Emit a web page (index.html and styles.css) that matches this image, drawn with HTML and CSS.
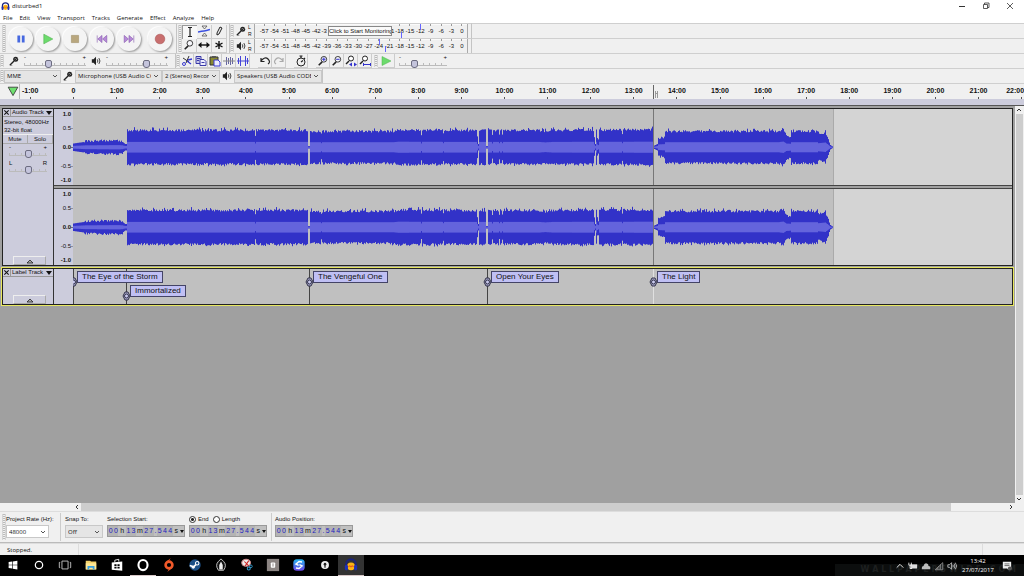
FILE: index.html
```html
<!DOCTYPE html>
<html lang="en">
<head>
    <meta charset="UTF-8">
    <meta name="viewport" content="width=device-width, initial-scale=1.0">
    <title>disturbed1</title>
    <link rel="stylesheet" href="styles.css">
    <script src="script.js" defer></script>
</head>
<body>

    <!-- Shared icons -->
    <svg class="defs" width="0" height="0" aria-hidden="true">
        <symbol id="mic" viewBox="0 0 12 12"><path d="M1 11 6 6" stroke="#222" stroke-width="1.6"/><path d="M1 11.500h3" stroke="#888"/><circle cx="8" cy="4" r="3" fill="#222"/><path d="M6.500 4 8 2.500M8 5l2-2" stroke="#ddd" stroke-width=".8"/></symbol>
        <symbol id="speaker" viewBox="0 0 12 12"><path d="M1 4h2l3-3v10L3 8H1z" fill="#222"/><path d="M7.500 4q1.500 2 0 4M9.500 2.500q2.500 3.500 0 7" fill="none" stroke="#222"/></symbol>
        <symbol id="audacity" viewBox="0 0 16 16"><path d="M2.500 9V7a5.500 5.500 0 0 1 11 0v2" fill="none" stroke="#1a237e" stroke-width="2.200"/><circle cx="8" cy="9.500" r="4.500" fill="#fbb414"/><path d="M5 10l1.500-1 1.500 1 1.500-1 1.500 1" fill="none" stroke="#e8561c" stroke-width="1.200"/><rect x="1" y="8" width="3.500" height="6" rx="1.500" fill="#1f2fb4"/><rect x="11.500" y="8" width="3.500" height="6" rx="1.500" fill="#1f2fb4"/></symbol>
        <symbol id="lens" viewBox="0 0 14 14"><path d="M2 12 6 8" stroke="#222" stroke-width="1.800"/><circle cx="8" cy="5" r="3.300" fill="#f6f6fa" stroke="#222"/></symbol>
        <symbol id="handle" viewBox="0 0 9 10"><path d="M3 1h3l2 4-2 4H3L1 5z" fill="#a8a8cc" stroke="#33334a"/><circle cx="4.500" cy="5" r="2" fill="#c9c9ee" stroke="#33334a"/></symbol>
    </svg>

    <header class="titlebar">
        <svg class="app-icon"><use href="#audacity"/></svg>
        <span class="title">disturbed1</span>
        <button class="win-btn" aria-label="Minimise"><svg viewBox="0 0 10 10"><path d="M2 5.500h6" stroke="#333"/></svg></button>
        <button class="win-btn" aria-label="Restore"><svg viewBox="0 0 10 10" fill="none" stroke="#333" stroke-width=".8"><path d="M2.500 3.500h4v4h-4zM3.500 3.500v-1.500h4.500v4.500H6.500"/></svg></button>
        <button class="win-btn" aria-label="Close"><svg viewBox="0 0 10 10"><path d="m2 2 6 6m0-6-6 6" stroke="#333" stroke-width=".8"/></svg></button>
    </header>

    <nav class="menu">
        <button>File</button><button>Edit</button><button>View</button><button>Transport</button><button>Tracks</button><button>Generate</button><button>Effect</button><button>Analyze</button><button>Help</button>
    </nav>

    <div class="dock">
        <div class="dock-row tall">
            <div class="toolbar transport">
                <i class="grip"></i>
                <button class="round" aria-label="Pause"><svg viewBox="0 0 10 10" fill="#4668e0"><path d="M2 2h2.300v6H2zM5.700 2H8v6H5.700z"/></svg></button>
                <button class="round" aria-label="Play"><svg viewBox="0 0 10 10"><path d="M1.500 1 9 5 1.500 9z" fill="#6cdb6c" stroke="#4eb04e" stroke-width=".5"/></svg></button>
                <button class="round" aria-label="Stop"><svg viewBox="0 0 10 10"><path d="M2 2h6v6H2z" fill="#b9a77e" stroke="#a08f68" stroke-width=".5"/></svg></button>
                <button class="round" aria-label="Skip to start"><svg viewBox="0 0 10 10" fill="#b78ad8" stroke="#8558ad" stroke-width=".5"><path d="M1 2v6M5 2 1.500 5 5 8zM9 2 5.500 5 9 8z"/></svg></button>
                <button class="round" aria-label="Skip to end"><svg viewBox="0 0 10 10" fill="#b78ad8" stroke="#8558ad" stroke-width=".5"><path d="M9 2v6M5 2l3.500 3L5 8zM1 2l3.500 3L1 8z"/></svg></button>
                <button class="round record" aria-label="Record"><svg viewBox="0 0 10 10"><circle cx="5" cy="5" r="4" fill="#c86e6e" stroke="#a55" stroke-width=".5"/></svg></button>
            </div>
            <div class="toolbar tools">
                <i class="grip"></i>
                <div class="tool-grid">
                    <button class="tool on" aria-label="Selection tool"><svg viewBox="0 0 12 12"><path d="M4 1.500h4M4 10.500h4M6 2v8" stroke="#222" stroke-width="1.200"/></svg></button>
                    <button class="tool" aria-label="Envelope tool"><svg viewBox="0 0 12 12" fill="none"><path d="M4 1h5L6.500 4zM4 11h5L6.500 8z" stroke="#555" stroke-width=".8"/><path d="M0 7q4-1 6-1t6-1.500" stroke="#3a4fe0" stroke-width="1.500"/></svg></button>
                    <button class="tool" aria-label="Draw tool"><svg viewBox="0 0 12 12"><path d="M4 10V8l3-6 2 1-3 6z" fill="#eee" stroke="#222"/></svg></button>
                    <button class="tool" aria-label="Zoom tool"><svg><use href="#lens"/></svg></button>
                    <button class="tool" aria-label="Time shift tool"><svg viewBox="0 0 12 12"><path d="M2 6h8" stroke="#111" stroke-width="1.400"/><path d="M0 6l3.500-3v6zM12 6 8.500 3v6z" fill="#111"/></svg></button>
                    <button class="tool" aria-label="Multi tool"><svg viewBox="0 0 12 12"><path d="M6 2v8M2.500 4l7 4M9.500 4l-7 4" stroke="#111" stroke-width="1.400"/></svg></button>
                </div>
            </div>
            <div class="meters">
                <div class="toolbar meter-bar">
                    <i class="grip"></i>
                    <svg class="small-icon"><use href="#mic"/></svg>
                    <div class="channels"><span>L</span><span>R</span></div>
                    <div class="meter">
                        <span>-57</span><span>-54</span><span>-51</span><span>-48</span><span>-45</span><span>-42</span><span class="cut">-3</span><span></span><span></span><span></span><span></span><span></span><span class="cut end">1</span><span>-18</span><span>-15</span><span>-12</span><span>-9</span><span>-6</span><span>-3</span><span>0</span>
                        <button class="monitor">Click to Start Monitoring</button>
                        <i class="peak rec-left"></i><i class="peak rec-right"></i>
                    </div>
                </div>
                <div class="toolbar meter-bar">
                    <i class="grip"></i>
                    <svg class="small-icon"><use href="#speaker"/></svg>
                    <div class="channels"><span>L</span><span>R</span></div>
                    <div class="meter">
                        <span>-57</span><span>-54</span><span>-51</span><span>-48</span><span>-45</span><span>-42</span><span>-39</span><span>-36</span><span>-33</span><span>-30</span><span>-27</span><span>-24</span><span>-21</span><span>-18</span><span>-15</span><span>-12</span><span>-9</span><span>-6</span><span>-3</span><span>0</span>
                        <i class="peak play-left"></i><i class="peak play-right"></i>
                    </div>
                </div>
            </div>
        </div>

        <div class="dock-row">
            <div class="toolbar mixer">
                <i class="grip"></i>
                <svg class="small-icon"><use href="#mic"/></svg>
                <div class="slider"><span>-</span><span>+</span><input type="range" min="0" max="100" value="38" aria-label="Recording volume"></div>
                <svg class="small-icon"><use href="#speaker"/></svg>
                <div class="slider"><span>-</span><span>+</span><input type="range" min="0" max="100" value="68" aria-label="Playback volume"></div>
            </div>
            <div class="toolbar edit">
                <i class="grip"></i>
                <button class="tool" aria-label="Cut"><svg viewBox="0 0 12 12"><path d="M2 3l6 4M8 1 5 8" stroke="#333"/><path d="M7 5l4-1M6 6l4 3" stroke="#3a3ad0" stroke-width="1.300"/><circle cx="3" cy="9" r="1.500" fill="none" stroke="#3a3ad0"/></svg></button>
                <button class="tool" aria-label="Copy"><svg viewBox="0 0 12 12" stroke="#3a3aa8"><path d="M1 1.500h5v7H1z" fill="#c8c8e8"/><path d="M5 4.500h4l2 2v4H5z" fill="#eef"/><path d="M6.500 7.500h3M2 3.500h3M2 5.500h2"/></svg></button>
                <button class="tool" aria-label="Paste"><svg viewBox="0 0 12 12"><path d="M1 2h8v8H1z" fill="#8a8a30" stroke="#333"/><path d="M3 1h4v2H3z" fill="#555"/><path d="M5 5h4l2 2v4H5z" fill="#eef" stroke="#3a3ad0"/></svg></button>
                <button class="tool" aria-label="Trim"><svg viewBox="0 0 12 12" stroke="#6666a0"><path d="M3.500 2v8M5.500 3v6M7.500 2v8M9.500 3v6"/><path d="M0 6h12" stroke="#888"/></svg></button>
                <button class="tool" aria-label="Silence"><svg viewBox="0 0 12 12" stroke="#4444d8"><path d="M1.500 3v6M3.500 1v10M8.500 1v10M10.500 3v6M0 6h12"/></svg></button>
                <i class="space"></i>
                <button class="tool" aria-label="Undo"><svg viewBox="0 0 12 12" fill="none" stroke="#222" stroke-width="1.200"><path d="M2 6q4-5 7-2t0 5M2 3v3.500h3.500"/></svg></button>
                <button class="tool" aria-label="Redo"><svg viewBox="0 0 12 12" fill="none" stroke="#aaa" stroke-width="1.200"><path d="M10 6Q6 1 3 4t0 5M10 3v3.500H6.500"/></svg></button>
                <i class="space"></i>
                <button class="tool" aria-label="Sync-lock tracks"><svg viewBox="0 0 12 12" fill="none" stroke="#222"><circle cx="6" cy="7" r="4"/><path d="M6 3V1M4.500 1h3M6 7l2-1.500M9 3l1 1" stroke-width="1.200"/></svg></button>
                <i class="space"></i>
                <button class="tool" aria-label="Zoom in"><svg viewBox="0 0 14 14"><use href="#lens"/><path d="M8 3v4M6 5h4" stroke="#33c" stroke-width="1.200"/></svg></button>
                <button class="tool" aria-label="Zoom out"><svg viewBox="0 0 14 14"><use href="#lens"/><path d="M6 5h4" stroke="#33c" stroke-width="1.200"/></svg></button>
                <button class="tool" aria-label="Fit selection"><svg viewBox="0 0 12 12"><path d="M1 9l3-3" stroke="#222" stroke-width="1.500"/><circle cx="6" cy="3.500" r="2.500" fill="#fff" stroke="#222"/><path d="M4 9.500l3-2v4zM12 9.500l-3-2v4z" fill="#33c"/></svg></button>
                <button class="tool" aria-label="Fit project"><svg viewBox="0 0 12 12"><path d="M1 9l3-3" stroke="#222" stroke-width="1.500"/><circle cx="6" cy="3.500" r="2.500" fill="#fff" stroke="#222"/><path d="M5 9.500h6M4.500 8v3M11.500 8v3" stroke="#33c"/></svg></button>
                <i class="grip"></i>
                <button class="tool play" aria-label="Play at speed"><svg viewBox="0 0 12 12"><path d="M2 1.500l9 4.500-9 4.500z" fill="#6cdb6c" stroke="#4eb04e" stroke-width=".5"/></svg></button>
                <div class="slider short"><span>-</span><span>+</span><input type="range" min="0" max="100" value="29" aria-label="Playback speed"></div>
            </div>
        </div>

        <div class="dock-row">
            <div class="toolbar device">
                <i class="grip"></i>
                <select class="host" aria-label="Audio host"><option>MME</option></select>
                <svg class="small-icon"><use href="#mic"/></svg>
                <select class="input-device" aria-label="Recording device"><option>Microphone (USB Audio CODEC)</option></select>
                <select class="rec-channels" aria-label="Recording channels"><option>2 (Stereo) Recording Channels</option></select>
                <svg class="small-icon"><use href="#speaker"/></svg>
                <select class="output-device" aria-label="Playback device"><option>Speakers (USB Audio CODEC)</option></select>
            </div>
        </div>
    </div>

    <div class="timeline">
        <button class="pin" aria-label="Pin play head"><svg viewBox="0 0 10 10"><path d="M1 1h8L5 8z" fill="#6fe06f" stroke="#333" stroke-width=".7"/></svg></button>
        <div class="ruler">
            <div class="ruler-labels">
                <span>-1:00</span><span>0</span><span>1:00</span><span>2:00</span><span>3:00</span><span>4:00</span><span>5:00</span><span>6:00</span><span>7:00</span><span>8:00</span><span>9:00</span><span>10:00</span><span>11:00</span><span>12:00</span><span>13:00</span><span>14:00</span><span>15:00</span><span>16:00</span><span>17:00</span><span>18:00</span><span>19:00</span><span>20:00</span><span>21:00</span><span>22:00</span>
            </div>
            <svg class="ticks" id="ticks"></svg>
            <svg class="play-cursor" viewBox="0 0 6 14"><path d="M.5 0v14" stroke="#666"/><path d="M2.500 6v7M4.500 6v7M2.500 9.500l2-2" fill="none" stroke="#999"/></svg>
        </div>
    </div>

    <main class="project">
        <div class="tracks">
            <section class="track audio">
                <div class="panel">
                    <div class="panel-title"><button class="close" aria-label="Close track"><svg viewBox="0 0 8 8"><path d="m1.500 1.500 5 5m0-5-5 5" stroke="#111" stroke-width="1.200"/></svg></button><button class="name">Audio Track <i class="down"></i></button></div>
                    <p>Stereo, 48000Hz</p>
                    <p>32-bit float</p>
                    <div class="mute-solo"><button>Mute</button><button>Solo</button></div>
                    <div class="slider gain"><span>-</span><span>+</span><input type="range" min="0" max="100" value="50" aria-label="Gain"></div>
                    <div class="slider gain"><span>L</span><span>R</span><input type="range" min="0" max="100" value="50" aria-label="Pan"></div>
                    <button class="collapse" aria-label="Collapse"><svg viewBox="0 0 8 6"><path d="M1 5l3-3 3 3z" fill="#aaa" stroke="#222" stroke-width=".8"/></svg></button>
                </div>
                <div class="scales">
                    <div class="scale"><b>1.0</b><span>0.5-</span><b>0.0-</b><span>-0.5-</span><b>-1.0</b></div>
                    <div class="scale"><b>1.0</b><span>0.5-</span><b>0.0-</b><span>-0.5-</span><b>-1.0</b></div>
                </div>
                <div class="waves">
                    <svg class="wave" data-seed="7"></svg>
                    <svg class="wave" data-seed="41"></svg>
                </div>
            </section>

            <section class="track labels">
                <div class="panel">
                    <div class="panel-title"><button class="close" aria-label="Close track"><svg viewBox="0 0 8 8"><path d="m1.500 1.500 5 5m0-5-5 5" stroke="#111" stroke-width="1.200"/></svg></button><button class="name">Label Track <i class="down"></i></button></div>
                    <button class="collapse" aria-label="Collapse"><svg viewBox="0 0 8 6"><path d="M1 5l3-3 3 3z" fill="#aaa" stroke="#222" stroke-width=".8"/></svg></button>
                </div>
                <div class="scales"></div>
                <div class="label-area">
                    <div class="marker m1"><svg><use href="#handle"/></svg><span>The Eye of the Storm</span></div>
                    <div class="marker m2 low"><svg><use href="#handle"/></svg><span>Immortalized</span></div>
                    <div class="marker m3"><svg><use href="#handle"/></svg><span>The Vengeful One</span></div>
                    <div class="marker m4"><svg><use href="#handle"/></svg><span>Open Your Eyes</span></div>
                    <div class="marker m5 current"><svg><use href="#handle"/></svg><span>The Light</span></div>
                </div>
            </section>
        </div>
        <div class="scroll-v">
            <button aria-label="Scroll up"><svg viewBox="0 0 8 8"><path d="M2 5l2-2 2 2" fill="none" stroke="#333"/></svg></button>
            <i class="thumb"></i>
            <button aria-label="Scroll down"><svg viewBox="0 0 8 8"><path d="M2 3l2 2 2-2" fill="none" stroke="#333"/></svg></button>
        </div>
    </main>
    <div class="scroll-h">
        <button aria-label="Scroll left"><svg viewBox="0 0 8 8"><path d="M5 2 3 4l2 2" fill="none" stroke="#333"/></svg></button>
        <i class="thumb"></i><i class="rest"></i>
        <button aria-label="Scroll right"><svg viewBox="0 0 8 8"><path d="M3 2l2 2-2 2" fill="none" stroke="#333"/></svg></button>
    </div>

    <div class="selection-bar">
        <i class="grip"></i>
        <div class="field rate">
            <label for="rate">Project Rate (Hz):</label>
            <select id="rate"><option>48000</option></select>
        </div>
        <div class="field snap">
            <label for="snap">Snap To:</label>
            <select id="snap"><option>Off</option></select>
        </div>
        <div class="field">
            <span>Selection Start:</span>
            <div class="time"><b>0</b><b>0</b><i>h</i><b>1</b><b>3</b><i>m</i><b>2</b><b>7</b><u>.</u><b>5</b><b>4</b><b>4</b><i>s</i><button aria-label="Time format"></button></div>
        </div>
        <div class="field">
            <div class="choice"><input type="radio" name="range" id="end" checked><label for="end">End</label><input type="radio" name="range" id="length"><label for="length">Length</label></div>
            <div class="time"><b>0</b><b>0</b><i>h</i><b>1</b><b>3</b><i>m</i><b>2</b><b>7</b><u>.</u><b>5</b><b>4</b><b>4</b><i>s</i><button aria-label="Time format"></button></div>
        </div>
        <div class="field position">
            <span>Audio Position:</span>
            <div class="time"><b>0</b><b>0</b><i>h</i><b>1</b><b>3</b><i>m</i><b>2</b><b>7</b><u>.</u><b>5</b><b>4</b><b>4</b><i>s</i><button aria-label="Time format"></button></div>
        </div>
    </div>

    <footer class="status"><span class="state">Stopped.</span><span class="message"></span><span class="rate-cell"></span></footer>

    <div class="taskbar">
        <button aria-label="Start"><svg viewBox="0 0 16 16" fill="#fff"><path d="M3 4.500 7 4v3.700H3zM7.700 3.900 13 3v4.700H7.700zM3 8.300h4V12l-4-.5zM7.700 8.300H13V13l-5.300-.8z"/></svg></button>
        <button aria-label="Cortana"><svg viewBox="0 0 16 16"><circle cx="8" cy="8" r="4.200" fill="none" stroke="#fff" stroke-width="1.400"/></svg></button>
        <button aria-label="Task view"><svg viewBox="0 0 16 16" fill="none" stroke="#ccc"><path d="M4.500 3.500h7v9h-7zM2.500 5H1.500v6h1M13.500 5h1v6h-1"/></svg></button>
        <button aria-label="File Explorer"><svg viewBox="0 0 16 16"><path d="M2 3h5l1 1h6v9H2z" fill="#f5d36b"/><path d="M2 6h12v7H2z" fill="#ffe896"/><path d="M4 9h8v4h-2v-2H6v2H4z" fill="#3aa0e0"/></svg></button>
        <button aria-label="Store"><svg viewBox="0 0 16 16"><path d="M2 5l12-1v10.500L2 13.500z" fill="#fff"/><path d="M5.500 5V2.500l4.500-1V4" fill="none" stroke="#fff"/><path d="M5 7h2.500v2H5zM8.500 7H11v2H8.500zM5 10h2.500v2H5zM8.500 10H11v2H8.500z" fill="#000"/></svg></button>
        <button class="open" aria-label="Opera"><svg viewBox="0 0 16 16"><ellipse cx="8" cy="8" rx="5.200" ry="5.800" fill="none" stroke="#fff" stroke-width="2.400"/></svg></button>
        <button aria-label="Origin"><svg viewBox="0 0 16 16"><circle cx="8" cy="8" r="3.900" fill="none" stroke="#f1592a" stroke-width="3"/><path d="M10 0 4 5l2 1zM6 16l6-5-2-1z" fill="#f1592a"/></svg></button>
        <button aria-label="Steam"><svg viewBox="0 0 16 16"><circle cx="8" cy="8" r="6.500" fill="#1b4f86"/><path d="M2 8.500 6.500 10l3-3" stroke="#fff" stroke-width="1.800" fill="none"/><circle cx="10.500" cy="6" r="2" fill="#1b4f86" stroke="#fff" stroke-width="1.200"/><circle cx="6" cy="10.500" r="1.700" fill="#fff"/></svg></button>
        <button aria-label="Music player"><svg viewBox="0 0 16 16"><path d="M5 14Q1 8 5 4l3-3 3 3q4 4 0 10z" fill="#111" stroke="#ddd"/><path d="M8 4 6 8v5h4V8z" fill="#eee"/></svg></button>
        <button aria-label="Snipping Tool"><svg viewBox="0 0 16 16"><ellipse cx="7" cy="5.500" rx="5" ry="4" fill="#eee" stroke="#c88" stroke-width="1.200"/><path d="M5 4l5 5M10 3 6 9" stroke="#c22" stroke-width="1.200"/><circle cx="10" cy="12" r="1.700" fill="none" stroke="#39c" stroke-width="1.200"/><circle cx="12.500" cy="9.500" r="1.500" fill="none" stroke="#39c"/></svg></button>
        <button aria-label="Notes"><svg viewBox="0 0 16 16"><path d="M1 1h14v14H1z" fill="#8b8482"/><rect x="5.500" y="5" width="5" height="6" rx="1" fill="#fff"/><path d="M7 7h2M7 9h2" stroke="#8b8482"/></svg></button>
        <button aria-label="Sync"><svg viewBox="0 0 16 16"><defs><linearGradient id="sync" x2="0" y2="1"><stop offset="0" stop-color="#26b5f0"/><stop offset="1" stop-color="#6a45e8"/></linearGradient></defs><rect x="1.500" y="1.500" width="13" height="13" rx="4" fill="url(#sync)"/><path d="M11.500 4.500 8 4 4.500 7l3 1.500M4.500 11.500l3.500.5 3.500-3-3-1.500" fill="none" stroke="#fff" stroke-width="1.600"/></svg></button>
        <button aria-label="Lock"><svg viewBox="0 0 16 16"><circle cx="8" cy="8" r="4.500" fill="#eee"/><circle cx="8" cy="7" r="1.500" fill="#222"/><path d="M7.300 7h1.400v4H7.300z" fill="#222"/></svg></button>
        <button class="open active" aria-label="Audacity"><svg viewBox="0 0 16 16"><use href="#audacity"/></svg></button>
        <div class="tray">
            <svg viewBox="0 0 12 12"><path d="M2 8l4-4 4 4" fill="none" stroke="#ddd" stroke-width="1.200"/></svg>
            <svg viewBox="0 0 12 12"><path d="M3 4h8v5H3z" fill="#ddd"/><path d="M1 2v3h3V2M2.500 5v4H5" fill="none" stroke="#fff"/></svg>
            <svg viewBox="0 0 12 12"><path d="M1 10V8q0-2 2-2 1-4 4-3 2 0 2 3 3 0 2 4z" fill="#bbb"/></svg>
            <svg viewBox="0 0 12 12" fill="none" stroke="#999"><path d="M1.500 10.500 10.500 2v8.500zM4 8v2M6 6v4M8 4v6"/></svg>
            <svg viewBox="0 0 12 12" fill="none" stroke="#ddd"><path d="M1 4.500h2L5.500 2v8L3 7.500H1zM7 4.500q1 1.500 0 3M8.500 3q2 3 0 6M10 2q3 4 0 8" stroke-width=".9"/></svg>
            <div class="clock"><span>13:42</span><span>27/07/2017</span></div>
            <svg class="notice" viewBox="0 0 12 12"><path d="M1 1h10v8H8v2L6 9H1z" fill="#eee"/><path d="M3 3.500h6M3 5.500h6" stroke="#555"/><circle cx="9.500" cy="9" r="2.500" fill="#555"/></svg>
            <span class="watermark">W A L L P A P E R S W I D E . C O M</span>
        </div>
    </div>

</body>
</html>
```
FILE: styles.css
```css
* {
    box-sizing: border-box;
}
body {
    display: flex;
    flex-direction: column;
    height: 100vh;
    margin: 0;
    overflow: hidden;
    background: #f0f0f0;
    color: #111;
    font: 6px/8px "Liberation Sans", Arial, sans-serif;
}
button, select, input {
    margin: 0;
    padding: 0;
    border: 0;
    border-radius: 0;
    background: none;
    color: inherit;
    font: inherit;
}
i, u {
    font-style: normal;
    text-decoration: none;
}
p {
    margin: 0;
}
svg {
    display: block;
}
.defs {
    position: absolute;
}

/* Title and menu */
.titlebar {
    display: flex;
    align-items: center;
    height: 12px;
    padding-right: 2px;
    background: #fff;
    font-family: "Open Sans", sans-serif;
}
.app-icon {
    width: 9px;
    height: 9px;
    margin: 0 2px 0 1px;
}
.title {
    flex: 1;
}
.win-btn {
    width: 24px;
}
.win-btn svg {
    width: 10px;
    height: 10px;
    margin: 0 auto;
}
.menu {
    display: flex;
    gap: 7px;
    height: 11px;
    padding: 0 3px;
    background: #fff;
    font-family: "Open Sans", sans-serif;
}

/* Toolbars */
.dock {
    background: repeating-linear-gradient(#cfcfcf 0 1px, #f0f0f0 1px 15px);
}
.dock-row {
    display: flex;
    height: 15px;
}
.dock-row.tall {
    height: 30px;
}
.toolbar {
    display: flex;
    align-items: center;
    border-top: 1px solid #cfcfcf;
    border-right: 1px solid #c4c4c4;
    background: #f0f0f0;
}
.grip {
    flex: none;
    align-self: stretch;
    width: 4px;
    margin: 1px 0;
    border-right: 1px solid #d4d4d4;
    border-left: 1px solid #d4d4d4;
    background: repeating-linear-gradient(#bbb 0 1px, #f0f0f0 1px 2px);
}
.transport {
    gap: 3px;
    width: 177px;
    padding-left: 2px;
}
.round {
    width: 24px;
    height: 24px;
    border-radius: 50%;
    background: #f4f4f4;
    box-shadow: 1px 1px 2px #999, -1px -1px 1px #fff;
}
.round svg {
    width: 12px;
    height: 12px;
    margin: 0 auto;
}
.record {
    margin-left: 4px;
}
.tools {
    width: 53px;
    padding-left: 1px;
}
.tool-grid {
    display: grid;
    grid-template-columns: repeat(3, 15px);
}
.tool {
    width: 15px;
    height: 14px;
    border-right: 1px solid #ccc;
    border-bottom: 1px solid #ccc;
}
.tool.on {
    border: 1px solid #999;
    border-width: 1px 0 0 1px;
    background: #f8f8f8;
}
.tool svg {
    width: 12px;
    height: 12px;
    margin: 0 auto;
}
.meters {
    width: 242px;
}
.meter-bar {
    height: 15px;
    padding-right: 3px;
}
.small-icon {
    flex: none;
    width: 10px;
    height: 10px;
    margin: 0 2px;
}
.channels {
    display: flex;
    flex-direction: column;
    width: 6px;
    font-size: 5px;
    line-height: 7px;
}
.meter {
    position: relative;
    display: flex;
    flex: 1;
    align-items: center;
    height: 14px;
    padding-left: 4px;
    border-right: 1px solid #aaa;
    border-left: 1px solid #aaa;
    background: linear-gradient(#fafafa 0 1px, #f0f0f0 1px);
}
.meter span {
    flex: 1 1 0;
    background: linear-gradient(#999, #999) 50% 0 / 1px 2px no-repeat;
    line-height: 14px;
    text-align: center;
}
.meter .cut {
    background: none;
    text-align: left;
}
.meter .end {
    text-align: right;
}
.monitor {
    position: absolute;
    top: 2px;
    left: 73px;
    width: 64px;
    height: 10px;
    overflow: hidden;
    border: 1px solid #888;
    background: #fafafa;
    line-height: 8px;
    white-space: nowrap;
}
.peak {
    position: absolute;
    top: 0;
    width: 1px;
    height: 6px;
    background: #6464ff;
}
.rec-left {
    left: 165px;
}
.rec-right {
    top: 8px;
    left: 146px;
}
.play-left {
    left: 124px;
}
.play-right {
    top: 7px;
    left: 130px;
}
.mixer {
    width: 176px;
}
.mixer .small-icon {
    margin: 0 5px;
}

/* Sliders */
.slider {
    display: grid;
    grid-template-columns: 1fr 1fr;
    width: 62px;
    line-height: 5px;
}
.slider span + span {
    text-align: right;
}
.slider input {
    grid-column: 1 / 3;
    width: 100%;
    height: 8px;
    appearance: none;
    background: linear-gradient(#bbb, #bbb) 0 5px / 100% 1px no-repeat, repeating-linear-gradient(90deg, #bbb 0 1px, transparent 1px 6px) 0 3px / 100% 2px no-repeat;
}
.slider input::-webkit-slider-thumb {
    width: 7px;
    height: 8px;
    border: 1px solid #6c6c80;
    border-radius: 2px 2px 3px 3px;
    appearance: none;
    background: #c4c4dc;
}
.slider.short {
    width: 48px;
    margin: 0 3px 0 4px;
}
.edit {
    border-right: 0;
}
.edit .tool {
    width: 14px;
}
.edit .play {
    width: 17px;
}
.edit .grip {
    margin-left: 2px;
}
.edit .grip:first-child {
    margin-left: 0;
}
.space {
    width: 8px;
}

/* Drop-downs */
select {
    overflow: hidden;
    height: 13px;
    padding: 0 10px 0 2px;
    border: 1px solid #c8c8c8;
    appearance: none;
    background: #e5e5e5 url("data:image/svg+xml,%3Csvg xmlns='http://www.w3.org/2000/svg' width='6' height='6'%3E%3Cpath d='M1 2l2 2 2-2' fill='none' stroke='%23555'/%3E%3C/svg%3E") right 2px center no-repeat;
    font-family: "Open Sans", sans-serif;
}
.host {
    width: 57px;
}
.input-device {
    width: 87px;
}
.rec-channels {
    width: 58px;
}
.output-device {
    width: 88px;
}

/* Time ruler */
.timeline {
    display: flex;
    height: 22px;
    border-top: 1px solid #cfcfcf;
    border-bottom: 6px solid #ccccdc;
}
.pin {
    width: 20px;
    border-right: 1px solid #bbb;
    padding-left: 7px;
}
.pin svg {
    width: 12px;
    height: 12px;
}
.ruler {
    position: relative;
    flex: 1;
    overflow: hidden;
}
.ruler-labels {
    display: flex;
    font-size: 7px;
    font-weight: bold;
    line-height: 13px;
}
.ruler-labels span {
    flex: 1 1 0;
    text-align: center;
}
.ruler-labels span:first-child {
    flex: none;
    width: 32px;
    padding-left: 2px;
    text-align: left;
}
.ruler-labels span:last-child {
    flex: none;
    width: 24px;
    text-align: right;
}
.ticks {
    width: 100%;
    height: 3px;
}
.play-cursor {
    position: absolute;
    top: 1px;
    left: 633px;
    width: 6px;
    height: 14px;
}

/* Tracks */
.project {
    display: flex;
    flex: 1;
    min-height: 0;
    border-top: 1px solid #555;
    background: #a0a0a0;
}
.tracks {
    flex: 1;
    min-width: 0;
    padding: 2px 2px 0;
}
.track {
    display: flex;
    border: 1px solid #222;
}
.panel {
    display: flex;
    flex-direction: column;
    width: 51px;
    border-right: 1px solid #333;
    background: #ccccdc;
}
.panel p {
    padding-left: 1px;
    white-space: nowrap;
}
.panel-title {
    display: flex;
    height: 8px;
    border-bottom: 1px solid #999;
}
.close {
    width: 8px;
    border-right: 1px solid #999;
}
.close svg {
    width: 7px;
    height: 7px;
}
.name {
    display: flex;
    flex: 1;
    align-items: center;
    justify-content: space-between;
    padding: 0 1px;
    line-height: 7px;
    white-space: nowrap;
}
.down {
    border: 3px solid transparent;
    border-top: 4px solid #111;
    border-bottom: 0;
}
.audio .panel-title {
    margin-bottom: 1px;
}
.mute-solo {
    display: flex;
    border-bottom: 1px solid #aaa;
    border-top: 1px solid #eee;
}
.mute-solo button {
    flex: 1;
    border-right: 1px solid #aaa;
}
.slider.gain {
    width: 38px;
    margin: 1px auto 2px 6px;
}
.collapse {
    width: 33px;
    height: 9px;
    margin: auto auto 0 10px;
    border: 1px solid #aaa;
    border-color: #eee #aaa #aaa #eee;
}
.collapse svg {
    width: 8px;
    height: 6px;
    margin: 0 auto;
}
.scales {
    width: 19px;
    background: #ccccdc;
}
.scale {
    display: grid;
    grid-template-rows: 1fr 2fr 2fr 2fr 1fr;
    align-items: center;
    height: 76px;
    text-align: right;
}
.scale + .scale, .wave + .wave {
    margin-top: 4px;
    box-shadow: 0 -1px #444, 0 -3px #a0a0a0, 0 -4px #444;
}
.scale b:first-child, .scale b:last-child {
    padding-right: 2px;
}
.waves {
    flex: 1;
    min-width: 0;
    background: #d4d4d4;
}
.wave {
    width: 100%;
    height: 76px;
}
.labels {
    height: 37px;
    margin-top: 2px;
    outline: 1px solid #e8e860;
}
.label-area {
    position: relative;
    flex: 1;
    overflow: hidden;
    background: #c0c0c0;
}
.marker {
    position: absolute;
    top: 0;
    bottom: 0;
    display: flex;
    align-items: flex-start;
    margin-left: -4px;
    padding-top: 2px;
    background: linear-gradient(#444, #444) 4px 0 / 1px 100% no-repeat;
}
.marker svg {
    width: 9px;
    height: 10px;
    margin: 6px -1px 0 0;
}
.marker span {
    height: 12px;
    padding: 0 4px;
    border: 1px solid #444466;
    background: #c0c0f4;
    font-size: 8px;
    line-height: 10px;
    white-space: nowrap;
}
.marker.low {
    padding-top: 16px;
}
.marker.current {
    background-image: linear-gradient(#e0e0e0, #e0e0e0);
}
.m1 {
    z-index: 1;
    left: 0;
}
.m2 {
    left: 53px;
}
.m3 {
    left: 236px;
}
.m4 {
    left: 414px;
}
.m5 {
    left: 580px;
}

/* Scroll bars */
.scroll-v {
    display: flex;
    flex-direction: column;
    width: 9px;
    background: #f0f0f0;
}
.scroll-v .thumb {
    flex: 1;
    margin: 0 1px;
    background: #cdcdcd;
}
.scroll-v svg, .scroll-h svg {
    width: 8px;
    height: 8px;
}
.scroll-h {
    display: flex;
    height: 9px;
    padding: 0 9px 0 73px;
    border-bottom: 1px solid #ddd;
}
.scroll-h .thumb {
    flex: 94;
    background: #cdcdcd;
}
.scroll-h .rest {
    flex: 6;
}

/* Selection toolbar */
.selection-bar {
    display: flex;
    height: 31px;
    padding: 1px 2px;
    border-bottom: 1px solid #bbb;
}
.field {
    display: flex;
    flex-direction: column;
    gap: 2px;
    margin-right: 4px;
    padding-top: 2px;
}
.rate {
    width: 55px;
    border-right: 1px solid #ccc;
    white-space: nowrap;
}
.rate select {
    width: 43px;
    background-color: #fff;
}
.snap {
    width: 38px;
}
.time {
    display: flex;
    align-items: center;
    width: 78px;
    height: 12px;
    border: 1px solid #999;
    background: #c0c0c0;
    font-size: 7px;
    text-align: center;
}
.time b {
    flex: 5 1 0;
    background: #b4b4b4;
    color: #2222c0;
    font-weight: normal;
    line-height: 10px;
}
.time i {
    flex: 7 1 0;
}
.time u {
    flex: 3 1 0;
    color: #2222c0;
}
.time button {
    border: 2px solid transparent;
    border-top: 3px solid #111;
    border-bottom: 0;
}
.choice {
    display: flex;
    align-items: center;
    gap: 2px;
    height: 8px;
}
.choice input {
    width: 7px;
    height: 7px;
    border: 1px solid #333;
    border-radius: 50%;
    appearance: none;
    background: #fff;
}
.choice input:checked {
    background: radial-gradient(#222 0 1px, #fff 2px);
}
.choice label {
    margin-right: 2px;
}
.position {
    padding-left: 3px;
    border-left: 1px solid #ccc;
}
.status {
    display: flex;
    height: 12px;
    border-top: 1px solid #ddd;
    font-family: "Open Sans", sans-serif;
    line-height: 12px;
}
.state {
    width: 79px;
    padding-left: 7px;
    border-right: 1px solid #ddd;
}
.message {
    flex: 1;
}
.rate-cell {
    width: 42px;
    border-left: 1px solid #ddd;
}

/* Taskbar */
.taskbar {
    display: flex;
    height: 21px;
    background: #000;
}
.taskbar button {
    width: 26px;
    border-bottom: 1px solid transparent;
}
.taskbar button svg {
    width: 14px;
    height: 14px;
    margin: 0 auto;
}
.taskbar .open {
    border-bottom-color: #d8c8c8;
}
.taskbar .active {
    background: #333;
}
.tray {
    position: relative;
    z-index: 0;
    display: flex;
    align-items: center;
    gap: 3px;
    margin-left: auto;
    padding: 0 12px 0 60px;
    background: linear-gradient(#000 9px, #0c0e0e 9px);
}
.tray svg {
    width: 10px;
    height: 10px;
}
.clock {
    display: flex;
    flex-direction: column;
    width: 32px;
    margin: 0 5px 0 2px;
    color: #fff;
    font-family: "Open Sans", sans-serif;
    line-height: 9px;
    text-align: center;
}
.watermark {
    position: absolute;
    z-index: -1;
    right: 8px;
    bottom: 2px;
    color: #1e2020;
    font: bold 8px/8px "DejaVu Sans", sans-serif;
    white-space: nowrap;
}
```
FILE: script.js
```js
const CLIP_END = 760;
const CURSOR = 580;
const PX_PER_MINUTE = 43.1;

// [x, peak height] points of the loudness envelope
const envelope = [
    [0, 3.5], [12, 5.2], [45, 6], [49, 5.2], [52, 3], [53, 3], [54, 16], [234, 16], [235, 1], [236, 1],
    [237, 15], [320, 15], [325, 16.5], [400, 15.8], [465, 16], [472, 14.5], [480, 16],
    [579, 16.5], [580, 1], [584, 3], [585, 8], [591, 9], [592, 15], [705, 15], [710, 17],
    [713, 11], [717, 10], [718, 15], [744, 15], [745, 12], [752, 14], [755, 7], [757, 2], [760, 0]
];

// narrow drops in level: x -> peak height
const notches = { 182: 11, 248: 12, 348: 11, 370: 12, 404: 9, 405: 3, 413: 1, 414: 1, 419: 11, 426: 12, 429: 12, 521: 8, 522: 3, 524: 8, 525: 6, 549: 12 };

function level(x) {
    if (x in notches) return notches[x];
    let i = 1;
    while (i < envelope.length - 1 && envelope[i][0] < x) i++;
    const [x0, y0] = envelope[i - 1];
    const [x1, y1] = envelope[i];
    return y0 + (y1 - y0) * (x - x0) / (x1 - x0);
}

function randomFrom(seed) {
    return () => {
        seed = (seed * 16807) % 2147483647;
        return seed / 2147483647;
    };
}

document.querySelectorAll('.wave').forEach(svg => {
    const random = randomFrom(Number(svg.dataset.seed) * 1009);
    let peaks = '';
    let rms = '';
    for (let x = 0; x < CLIP_END; x++) {
        const h = level(x);
        const spike = h > 10 && random() > 0.88 ? 2 : 0;
        const up = h + (h > 5 ? random() * 2.4 - 0.5 + spike : 0);
        const down = h + (h > 5 ? random() * 2.4 - 0.5 + spike / 2 : 0);
        const inner = Math.min(h * 0.32, 5.5);
        peaks += `M${x + 0.5} ${(38 - up).toFixed(1)}V${(38.5 + down).toFixed(1)}`;
        rms += `M${x + 0.5} ${(38 - inner).toFixed(1)}V${(38.5 + inner).toFixed(1)}`;
    }
    svg.innerHTML = `
        <rect width="${CLIP_END}" height="76" fill="#c0c0c0"/>
        <path d="${peaks}" stroke="#3232c8"/>
        <path d="${rms}" stroke="#6464dc"/>
        <path d="M${CLIP_END + 0.5} 0V76" stroke="#aaa"/>
        <path d="M${CURSOR + 0.5} 0V76" stroke="#777"/>`;
});

// quarter-minute ticks, taller on the minute
let ticks = '';
for (let i = -4; i < 92; i++) {
    const x = Math.round(53 + i * PX_PER_MINUTE / 4) + 0.5;
    ticks += `M${x} ${i % 4 ? 2 : 0}V3`;
}
document.getElementById('ticks').innerHTML = `<path d="${ticks}" stroke="#555"/>`;
```
